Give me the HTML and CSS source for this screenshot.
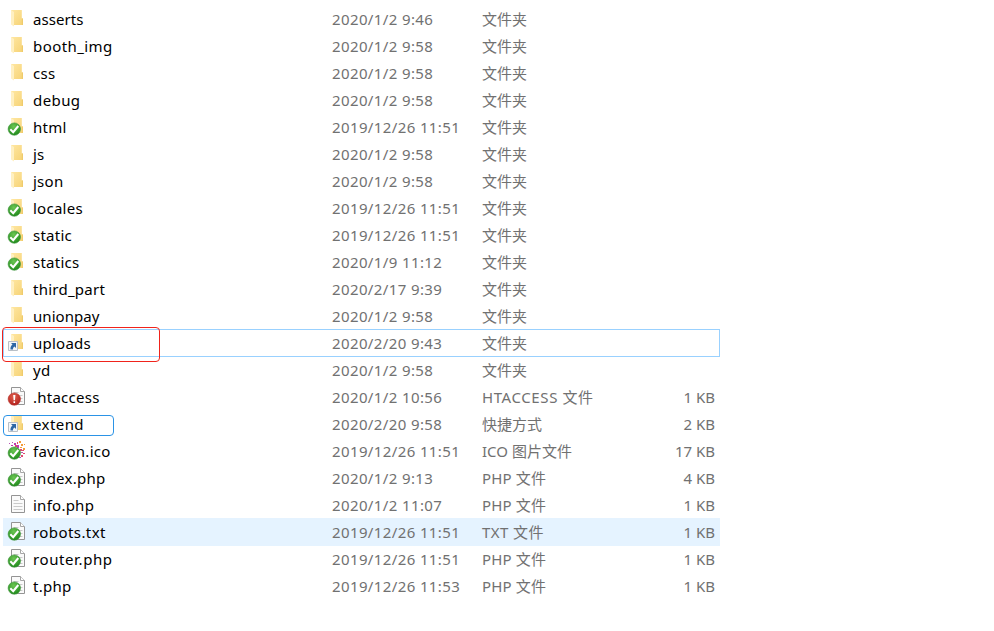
FILE: index.html
```
<!DOCTYPE html>
<html lang="zh-CN">
<head>
<meta charset="utf-8">
<title>Files</title>
<link rel="stylesheet" href="styles.css">
</head>
<body>
<svg class="defs" width="0" height="0">
  <defs>
    <linearGradient id="gf" x1="0" y1="0" x2="1" y2="1"><stop offset="0" stop-color="#ffe7a2"/><stop offset="1" stop-color="#f6d376"/></linearGradient>
    <radialGradient id="gg" cx=".45" cy=".3" r=".7"><stop offset="0" stop-color="#6cc653"/><stop offset="1" stop-color="#1f8a1c"/></radialGradient>
    <radialGradient id="gr" cx=".45" cy=".3" r=".7"><stop offset="0" stop-color="#e0614f"/><stop offset="1" stop-color="#b3201c"/></radialGradient>
    <symbol id="folder" viewBox="0 0 20 20"><path d="M5 2h10.800v8.500H17V17H6z" fill="url(#gf)"/><path d="M5 2l3 2v14.500l-3-2z" fill="#fff0c2"/><path d="M15.800 10.500H17V17h-1.200z" fill="#efcb6c"/></symbol>
    <symbol id="page" viewBox="0 0 20 20"><path d="M5.500 1.500h9l4 4v13h-13z" fill="#fafafa" stroke="#949494"/><path d="M14.500 1.500v4h4" fill="#fff" stroke="#a6a6a6"/><path d="M7.500 6.500h5M7.500 9.500h9M7.500 12.500h9M7.500 15.500h9" stroke="#cacaca"/></symbol>
    <symbol id="ok" viewBox="0 0 20 20"><circle cx="8.300" cy="13.100" r="6.200" fill="url(#gg)" stroke="#3b9237" stroke-width=".6"/><path d="M4.300 13.200l2.900 3L12.300 10" fill="none" stroke="#fff" stroke-width="2"/></symbol>
    <symbol id="warn" viewBox="0 0 20 20"><circle cx="8.300" cy="13.100" r="6.200" fill="url(#gr)" stroke="#b8332b" stroke-width=".6"/><path d="M7.200 8.900h2.200l-.4 5.300H7.600zM7.500 15.300h1.600V17H7.500z" fill="#fff"/></symbol>
    <symbol id="link" viewBox="0 0 20 20"><path d="M2.500 9.500h9v9h-9z" fill="#f3f6f9" stroke="#b8bfc6"/><path d="M5 11h5v5l-1.500-1.500C7 15.500 7 16.500 7 17.500H4.500c-.3-2 .4-3.600 2-5z" fill="#2e67a5"/></symbol>
    <symbol id="burst" viewBox="0 0 20 20"><path d="M8 3h2v2H8zM5 5h2v1H5zM11 5h2v3h-2z" fill="#c03bb0"/><path d="M13 1h2v2h-2zM15 4h2v2h-2zM14 7h2v1h-2zM17 8h2v2h-2zM18 4h1v1h-1z" fill="#f49b38"/><path d="M11 2h1v2h-1zM9 5h2v2H9zM16 10h2v1h-2zM14 9h2v2h-2zM17 13h2v1h-2zM15 15h2v2h-2z" fill="#e04a70"/><path d="M3 3h1v1H3zM6 2h1v1H6zM15 12h2v1h-2zM13 17h2v1h-2z" fill="#b654b5"/></symbol>
  </defs>
</svg>
<main class="list">
  <div class="row"><svg class="icon"><use href="#folder"/></svg><span class="name tight">asserts</span><span class="date">2020/1/2 9:46</span><span class="type">文件夹</span><span class="size"></span></div>
  <div class="row"><svg class="icon"><use href="#folder"/></svg><span class="name wide">booth_img</span><span class="date">2020/1/2 9:58</span><span class="type">文件夹</span><span class="size"></span></div>
  <div class="row"><svg class="icon"><use href="#folder"/></svg><span class="name">css</span><span class="date">2020/1/2 9:58</span><span class="type">文件夹</span><span class="size"></span></div>
  <div class="row"><svg class="icon"><use href="#folder"/></svg><span class="name wide">debug</span><span class="date">2020/1/2 9:58</span><span class="type">文件夹</span><span class="size"></span></div>
  <div class="row"><svg class="icon"><use href="#folder"/><use href="#ok"/></svg><span class="name">html</span><span class="date">2019/12/26 11:51</span><span class="type">文件夹</span><span class="size"></span></div>
  <div class="row"><svg class="icon"><use href="#folder"/></svg><span class="name">js</span><span class="date">2020/1/2 9:58</span><span class="type">文件夹</span><span class="size"></span></div>
  <div class="row"><svg class="icon"><use href="#folder"/></svg><span class="name">json</span><span class="date">2020/1/2 9:58</span><span class="type">文件夹</span><span class="size"></span></div>
  <div class="row"><svg class="icon"><use href="#folder"/><use href="#ok"/></svg><span class="name">locales</span><span class="date">2019/12/26 11:51</span><span class="type">文件夹</span><span class="size"></span></div>
  <div class="row"><svg class="icon"><use href="#folder"/><use href="#ok"/></svg><span class="name">static</span><span class="date">2019/12/26 11:51</span><span class="type">文件夹</span><span class="size"></span></div>
  <div class="row"><svg class="icon"><use href="#folder"/><use href="#ok"/></svg><span class="name">statics</span><span class="date">2020/1/9 11:12</span><span class="type">文件夹</span><span class="size"></span></div>
  <div class="row"><svg class="icon"><use href="#folder"/></svg><span class="name">third_part</span><span class="date">2020/2/17 9:39</span><span class="type">文件夹</span><span class="size"></span></div>
  <div class="row"><svg class="icon"><use href="#folder"/></svg><span class="name tight">unionpay</span><span class="date">2020/1/2 9:58</span><span class="type">文件夹</span><span class="size"></span></div>
  <div class="row focused"><svg class="icon"><use href="#folder"/><use href="#link"/></svg><span class="name">uploads</span><span class="date">2020/2/20 9:43</span><span class="type">文件夹</span><span class="size"></span><i class="mark mark-red"></i></div>
  <div class="row"><svg class="icon"><use href="#folder"/></svg><span class="name wide">yd</span><span class="date">2020/1/2 9:58</span><span class="type">文件夹</span><span class="size"></span></div>
  <div class="row"><svg class="icon"><use href="#page"/><use href="#warn"/></svg><span class="name">.htaccess</span><span class="date">2020/1/2 10:56</span><span class="type wider">HTACCESS 文件</span><span class="size">1 KB</span></div>
  <div class="row"><svg class="icon"><use href="#folder"/><use href="#link"/></svg><span class="name wide">extend</span><span class="date">2020/2/20 9:58</span><span class="type">快捷方式</span><span class="size">2 KB</span><i class="mark mark-blue"></i></div>
  <div class="row"><svg class="icon"><use href="#burst"/><use href="#ok"/></svg><span class="name">favicon.ico</span><span class="date">2019/12/26 11:51</span><span class="type">ICO 图片文件</span><span class="size">17 KB</span></div>
  <div class="row"><svg class="icon"><use href="#page"/><use href="#ok"/></svg><span class="name">index.php</span><span class="date">2020/1/2 9:13</span><span class="type php">PHP 文件</span><span class="size">4 KB</span></div>
  <div class="row"><svg class="icon"><use href="#page"/></svg><span class="name">info.php</span><span class="date">2020/1/2 11:07</span><span class="type php">PHP 文件</span><span class="size">1 KB</span></div>
  <div class="row hover"><svg class="icon"><use href="#page"/><use href="#ok"/></svg><span class="name wide">robots.txt</span><span class="date">2019/12/26 11:51</span><span class="type wide">TXT 文件</span><span class="size">1 KB</span></div>
  <div class="row"><svg class="icon"><use href="#page"/><use href="#ok"/></svg><span class="name wider">router.php</span><span class="date">2019/12/26 11:51</span><span class="type php">PHP 文件</span><span class="size">1 KB</span></div>
  <div class="row"><svg class="icon"><use href="#page"/><use href="#ok"/></svg><span class="name">t.php</span><span class="date">2019/12/26 11:53</span><span class="type php">PHP 文件</span><span class="size">1 KB</span></div>
</main>
</body>
</html>
```
FILE: styles.css
```
body {
  margin: 0;
  background: #fff;
  font: 15px/27px "Noto Sans", "Noto Sans CJK SC", sans-serif;
  color: #717171;
}
.defs { position: absolute; }
.list { width: 717px; padding: 5px 0 0 3px; }
.row {
  position: relative;
  display: grid;
  grid-template-columns: 30px 299px 150px 130px 1fr;
  height: 27px;
  padding-right: 5px;
  white-space: nowrap;
}
.row > span { height: 27px; line-height: 28px; }
.icon { width: 20px; height: 20px; margin: 3px 0 0 3px; }
.name { color: #000; letter-spacing: .25px; }
.date { letter-spacing: .38px; }
.size { text-align: right; }
.tight { letter-spacing: .05px; }
.php { letter-spacing: .15px; }
.wide { letter-spacing: .42px; }
.wider { letter-spacing: .6px; }
.focused { box-shadow: inset 0 0 0 1px #99d1ff; height: 28px; margin-bottom: -1px; }
.hover { background: #e5f3ff; height: 28px; margin-bottom: -1px; }
.mark { position: absolute; box-sizing: border-box; border: 1px solid; border-radius: 4px; }
.mark-red { left: -1px; top: -2px; width: 158px; height: 35px; border-color: #f0231b; z-index: 1; }
.mark-blue { left: 0; top: 5px; width: 111px; height: 21px; border-color: #2b93e6; }
```
